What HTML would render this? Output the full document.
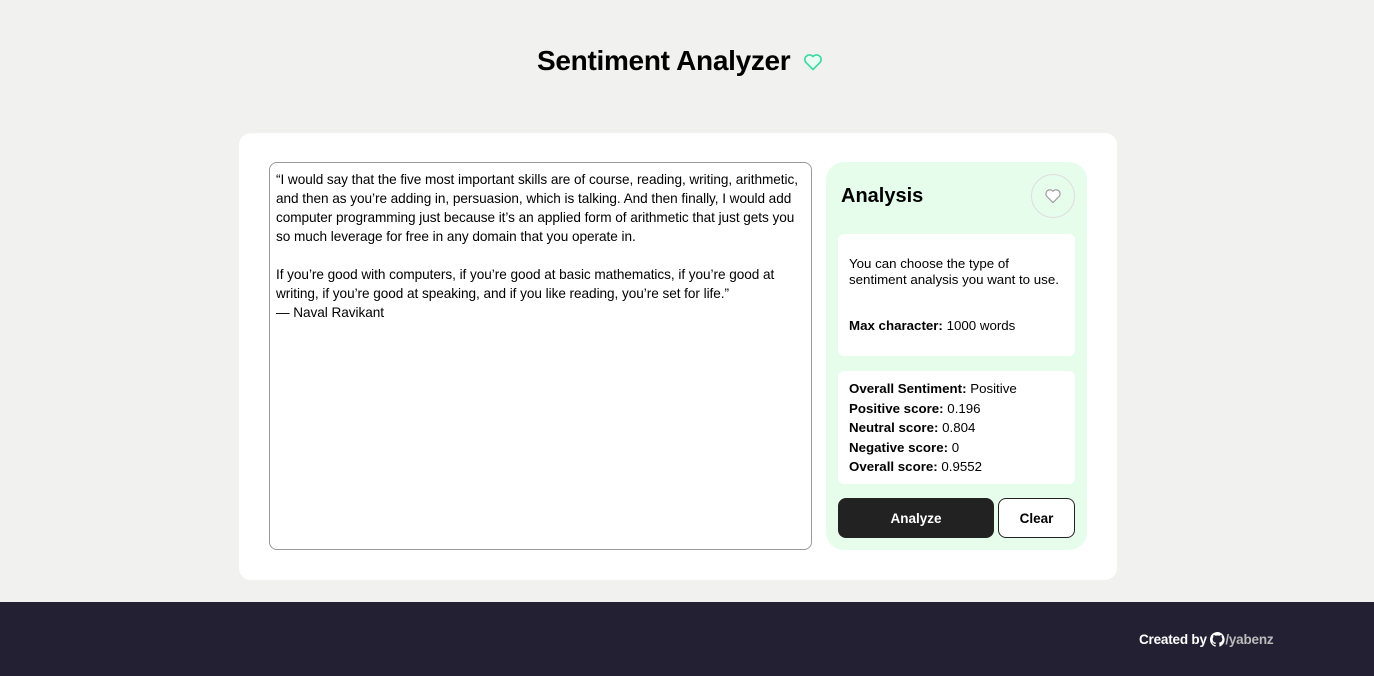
<!DOCTYPE html>
<html><head><style>
*{box-sizing:border-box;margin:0;padding:0}
body{width:1374px;height:676px;background:#f1f2f0;font-family:"Liberation Sans",Arial,sans-serif;position:relative;overflow:hidden;color:#000}
h1{position:absolute;left:537px;top:45px;font-size:28px;font-weight:700;letter-spacing:-0.3px}
.hh{position:absolute;left:803px;top:52px}
.card{position:absolute;left:239px;top:133px;width:878px;height:447px;background:#fff;border-radius:12px}
.ta{position:absolute;left:269px;top:162px;width:543px;height:388px;border:1px solid #999;border-radius:8px;padding:7px 6px;font-size:13.6px;line-height:19px;letter-spacing:-0.05px;white-space:nowrap}
.panel{position:absolute;left:826px;top:162px;width:261px;height:388px;background:#e6fdec;border-radius:18px}
.an{position:absolute;left:841px;top:185px;font-size:20px;font-weight:700}
.circ{position:absolute;left:1031px;top:174px;width:44px;height:44px;border:1px solid #ddd;border-radius:50%;display:flex;align-items:center;justify-content:center}
.box{position:absolute;left:838px;background:#fff;border-radius:6px;width:237px;font-size:13.3px;padding:0 11px;white-space:nowrap}
.b1{top:234px;height:122px;padding-top:22px;line-height:15.5px}
.b2{top:371px;height:113px;padding-top:8px;line-height:19.5px}
.btn{position:absolute;top:498px;height:40px;border-radius:8px;font-size:13.5px;font-weight:700;display:flex;align-items:center;justify-content:center}
footer{position:absolute;left:0;top:602px;width:1374px;height:74px;background:#232033}
.cr{position:absolute;left:1139px;top:632px;color:#fff;font-weight:700;font-size:13.5px;display:flex;align-items:center;letter-spacing:-0.2px}
</style></head><body>
<h1>Sentiment Analyzer</h1>
<svg class="hh" width="20" height="20" viewBox="0 0 24 24"><path d="M12 21 3.5 12.5A5 5 0 0 1 12 5.5a5 5 0 0 1 8.5 7Z" fill="#e8fdf4" stroke="#3fd9a0" stroke-width="2" stroke-linejoin="round"/></svg>
<div class="card"></div>
<div class="ta">“I would say that the five most important skills are of course, reading, writing, arithmetic,<br>and then as you’re adding in, persuasion, which is talking. And then finally, I would add<br>computer programming just because it’s an applied form of arithmetic that just gets you<br>so much leverage for free in any domain that you operate in.<br><br>If you’re good with computers, if you’re good at basic mathematics, if you’re good at<br>writing, if you’re good at speaking, and if you like reading, you’re set for life.”<br>— Naval Ravikant</div>
<div class="panel"></div>
<div class="an">Analysis</div>
<div class="circ"><svg width="18" height="16" viewBox="0 0 24 22"><path d="M12 20 3.5 11.5A5 5 0 0 1 12 4.5a5 5 0 0 1 8.5 7Z" fill="#fff" stroke="#999" stroke-width="1.6" stroke-linejoin="round"/></svg></div>
<div class="box b1">You can choose the type of<br>sentiment analysis you want to use.<br><br><br><b>Max character:</b> 1000 words</div>
<div class="box b2"><b>Overall Sentiment:</b> Positive<br><b>Positive score:</b> 0.196<br><b>Neutral score:</b> 0.804<br><b>Negative score:</b> 0<br><b>Overall score:</b> 0.9552</div>
<div class="btn" style="left:838px;width:156px;background:#222;color:#fff">Analyze</div>
<div class="btn" style="left:998px;width:77px;background:#fff;border:1px solid #222">Clear</div>
<footer></footer>
<div class="cr">Created by&nbsp;<svg width="15" height="15" viewBox="0 0 16 16"><path fill="#fff" d="M8 0a8 8 0 0 0-2.5 15.6c.4 0 .5-.2.5-.4v-1.5c-2.2.5-2.700-1-2.7-1-.4-.9-.9-1.2-.9-1.2-.7-.5.1-.5.1-.5.8.1 1.2.8 1.2.8.7 1.3 1.9.9 2.3.7.1-.5.3-.9.5-1.1-1.8-.2-3.6-.9-3.6-4 0-.9.3-1.6.8-2.1-.1-.2-.4-1 .1-2.1 0 0 .7-.2 2.2.8a7.4 7.4 0 0 1 4 0c1.5-1 2.2-.8 2.2-.8.4 1.1.2 1.9.1 2.1.5.6.8 1.3.8 2.1 0 3.1-1.9 3.7-3.600 3.9.3.3.5.8.5 1.5v2.2c0 .2.1.5.6.4A8 8 0 0 0 8 0Z"/></svg><span style="color:#bbb">/yabenz</span></div>
</body></html>
